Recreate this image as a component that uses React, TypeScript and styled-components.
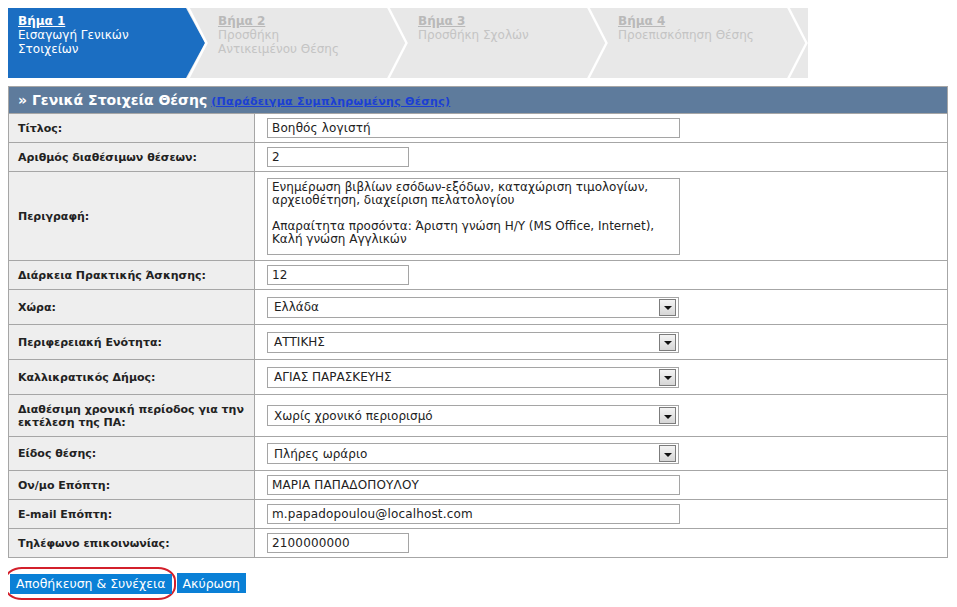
import styled, { createGlobalStyle } from "styled-components";

const GlobalStyle = createGlobalStyle`
  body {
    margin: 8px;
    background: #fff;
    font-family: "DejaVu Sans", Verdana, sans-serif;
    color: #222;
  }
`;

const StepBar = styled.div`
  display: flex;
  width: 800px;
  height: 70px;
  background: #e8e8e8;
`;

const StepItem = styled.div<{ $active?: boolean }>`
  position: relative;
  width: 200px;
  height: 70px;
  box-sizing: border-box;
  padding: 6px 0 0 10px;
  font-size: 12px;
  line-height: 14px;
  color: ${(p) => (p.$active ? "#ffffff" : "#c4c4c4")};
`;

const StepShape = styled.svg`
  position: absolute;
  left: 0;
  top: 0;
  width: 200px;
  height: 70px;
`;

const StepText = styled.div`
  position: relative;
`;

const StepNum = styled.span<{ $active?: boolean }>`
  display: inline-block;
  font-weight: bold;
  text-decoration: underline;
  color: ${(p) => (p.$active ? "#ffffff" : "#b9b9b9")};
`;

const FormTable = styled.div`
  width: 940px;
  margin-top: 8px;
  border: 1px solid #a6a6a6;
  box-sizing: border-box;
`;

const Header = styled.div`
  height: 26px;
  display: flex;
  align-items: center;
  gap: 4px;
  padding-left: 9px;
  background: #5e7b9c;
  color: #fff;
  font-size: 14px;
  font-weight: bold;
`;

const SampleLink = styled.a`
  font-size: 11px;
  font-weight: bold;
  letter-spacing: 0.3px;
  color: #1b3fd4;
  text-decoration: underline;
  position: relative;
  top: 1px;
`;

const Row = styled.div<{ $h: number }>`
  display: grid;
  grid-template-columns: 246px 1fr;
  height: ${(p) => p.$h}px;
  border-top: 1px solid #a6a6a6;
  box-sizing: border-box;
`;

const Label = styled.div`
  display: flex;
  align-items: center;
  box-sizing: border-box;
  padding: 0 9px;
  background: #eeeeee;
  border-right: 1px solid #a6a6a6;
  font-size: 11px;
  font-weight: bold;
  line-height: 13px;
  color: #222;
`;

const Value = styled.div`
  display: flex;
  align-items: center;
  padding-left: 12px;
`;

const TextInput = styled.input<{ $short?: boolean }>`
  width: ${(p) => (p.$short ? 142 : 413)}px;
  height: 20px;
  box-sizing: border-box;
  border: 1px solid #a5a5a5;
  padding: 0 4px;
  font-family: "DejaVu Sans", Verdana, sans-serif;
  font-size: 12px;
  letter-spacing: 0.15px;
  color: #222;
  outline: none;
`;

const TextArea = styled.textarea`
  width: 413px;
  height: 77px;
  box-sizing: border-box;
  border: 1px solid #a5a5a5;
  padding: 2px 4px;
  resize: none;
  font-family: "DejaVu Sans", Verdana, sans-serif;
  font-size: 12px;
  line-height: 13px;
  color: #222;
  outline: none;
  overflow: hidden;
`;

const SelectBox = styled.div`
  width: 412px;
  height: 21px;
  box-sizing: border-box;
  border: 1px solid #a5a5a5;
  display: flex;
  align-items: center;
  justify-content: space-between;
  padding: 0 2px 0 6px;
  font-size: 12px;
  color: #222;
  background: #fff;
`;

const DropButton = styled.span`
  width: 17px;
  height: 17px;
  box-sizing: border-box;
  border: 1px solid #7c7c7c;
  background: linear-gradient(#f4f4f4, #d6d6d6);
  display: flex;
  align-items: center;
  justify-content: center;

  &::after {
    content: "";
    border-left: 4px solid transparent;
    border-right: 4px solid transparent;
    border-top: 4px solid #111;
    margin-top: 2px;
  }
`;

const Actions = styled.div`
  display: flex;
  align-items: center;
  gap: 1px;
  margin: 9px 0 0 -4px;
`;

const Highlight = styled.div`
  padding: 4px 2px 4px 4px;
  border: 2px solid #d3202b;
  border-radius: 18px / 14px;
`;

const Button = styled.button`
  height: 20px;
  padding: 0 6px;
  border: none;
  background: #0a80d6;
  color: #fff;
  font-family: "DejaVu Sans", Verdana, sans-serif;
  font-size: 12.5px;
  cursor: pointer;
`;

const steps = [
  { num: "Βήμα 1", lines: ["Εισαγωγή Γενικών", "Στοιχείων"], active: true },
  { num: "Βήμα 2", lines: ["Προσθήκη", "Αντικειμένου Θέσης"] },
  { num: "Βήμα 3", lines: ["Προσθήκη Σχολών"] },
  { num: "Βήμα 4", lines: ["Προεπισκόπηση Θέσης"] },
];

type Field =
  | { kind: "input"; label: string; value: string; h: number; short?: boolean }
  | { kind: "select"; label: string; value: string; h: number }
  | { kind: "area"; label: string; value: string; h: number };

const fields: Field[] = [
  { kind: "input", label: "Τίτλος:", value: "Βοηθός λογιστή", h: 29 },
  { kind: "input", label: "Αριθμός διαθέσιμων θέσεων:", value: "2", h: 29, short: true },
  {
    kind: "area",
    label: "Περιγραφή:",
    value:
      "Ενημέρωση βιβλίων εσόδων-εξόδων, καταχώριση τιμολογίων, αρχειοθέτηση, διαχείριση πελατολογίου\n\nΑπαραίτητα προσόντα: Άριστη γνώση Η/Υ (MS Office, Internet), Καλή γνώση Αγγλικών",
    h: 89,
  },
  { kind: "input", label: "Διάρκεια Πρακτικής Άσκησης:", value: "12", h: 29, short: true },
  { kind: "select", label: "Χώρα:", value: "Ελλάδα", h: 35 },
  { kind: "select", label: "Περιφερειακή Ενότητα:", value: "ΑΤΤΙΚΗΣ", h: 35 },
  { kind: "select", label: "Καλλικρατικός Δήμος:", value: "ΑΓΙΑΣ ΠΑΡΑΣΚΕΥΗΣ", h: 35 },
  {
    kind: "select",
    label: "Διαθέσιμη χρονική περίοδος για την εκτέλεση της ΠΑ:",
    value: "Χωρίς χρονικό περιορισμό",
    h: 42,
  },
  { kind: "select", label: "Είδος θέσης:", value: "Πλήρες ωράριο", h: 34 },
  { kind: "input", label: "Ον/μο Επόπτη:", value: "ΜΑΡΙΑ ΠΑΠΑΔΟΠΟΥΛΟΥ", h: 29 },
  { kind: "input", label: "E-mail Επόπτη:", value: "m.papadopoulou@localhost.com", h: 29 },
  { kind: "input", label: "Τηλέφωνο επικοινωνίας:", value: "2100000000", h: 29, short: true },
];

function renderValue(f: Field) {
  if (f.kind === "area") return <TextArea defaultValue={f.value} />;
  if (f.kind === "select")
    return (
      <SelectBox>
        <span>{f.value}</span>
        <DropButton />
      </SelectBox>
    );
  return <TextInput type="text" defaultValue={f.value} $short={f.short} />;
}

export default function App() {
  return (
    <>
      <GlobalStyle />
      <StepBar>
        {steps.map((s) => (
          <StepItem key={s.num} $active={s.active}>
            <StepShape viewBox="0 0 200 70">
              {s.active && (
                <polygon points="0,0 178,0 197,35 178,70 0,70" fill="#1b6ec2" />
              )}
              <polyline
                points="179.5,-2 198.5,35 179.5,72"
                fill="none"
                stroke="#ffffff"
                strokeWidth="2.4"
              />
            </StepShape>
            <StepText>
              <StepNum $active={s.active}>{s.num}</StepNum>
              {s.lines.map((l) => (
                <div key={l}>{l}</div>
              ))}
            </StepText>
          </StepItem>
        ))}
      </StepBar>

      <FormTable>
        <Header>
          <span>» Γενικά Στοιχεία Θέσης</span>
          <SampleLink href="#">(Παράδειγμα Συμπληρωμένης Θέσης)</SampleLink>
        </Header>
        {fields.map((f) => (
          <Row key={f.label} $h={f.h}>
            <Label>{f.label}</Label>
            <Value>{renderValue(f)}</Value>
          </Row>
        ))}
      </FormTable>

      <Actions>
        <Highlight>
          <Button>Αποθήκευση &amp; Συνέχεια</Button>
        </Highlight>
        <Button>Ακύρωση</Button>
      </Actions>
    </>
  );
}
